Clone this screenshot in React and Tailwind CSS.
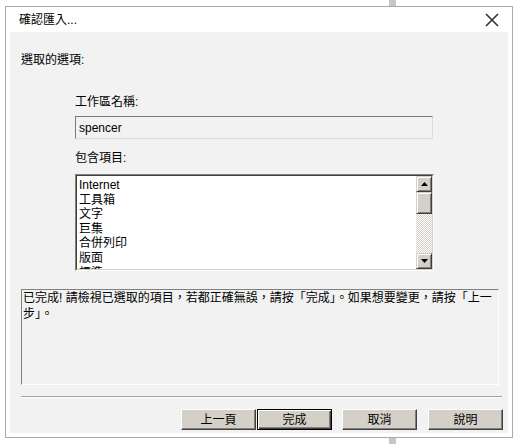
const items = ["Internet", "工具箱", "文字", "巨集", "合併列印", "版面", "標準"];

function ClassicButton({ label, isDefault, className = "" }) {
  const bevel = isDefault
    ? "border border-black shadow-[inset_1px_1px_#ffffff,inset_-1px_-1px_#404040,inset_-2px_-2px_#808080]"
    : "border-t border-l border-t-white border-l-white border-b border-r border-b-[#404040] border-r-[#404040] shadow-[inset_-1px_-1px_#808080]";
  return (
    <button
      className={`w-[75px] h-[21px] bg-[#d4d0c8] text-[12px] leading-[16px] text-black flex items-center justify-center ${bevel} ${className}`}
    >
      {label}
    </button>
  );
}

function ScrollArrow({ up }) {
  return (
    <div className="w-[16px] h-[16px] bg-[#d4d0c8] border-t border-l border-t-[#d4d0c8] border-l-[#d4d0c8] border-b border-r border-b-[#404040] border-r-[#404040] shadow-[inset_1px_1px_#ffffff,inset_-1px_-1px_#808080] flex items-center justify-center">
      <svg width="7" height="4" viewBox="0 0 7 4">
        {up ? (
          <polygon points="3.5,0 7,4 0,4" fill="#000" />
        ) : (
          <polygon points="0,0 7,0 3.5,4" fill="#000" />
        )}
      </svg>
    </div>
  );
}

export default function App() {
  return (
    <div className="relative w-[518px] h-[444px] bg-white overflow-hidden font-['Liberation_Sans','Noto_Sans_CJK_TC',sans-serif] text-black">
      <div className="absolute left-[389px] top-0 w-[7px] h-full bg-[#c6c6c6]" />

      <div className="absolute left-[5px] top-[6px] w-[508px] h-[432px] border border-[#aaaaaa] bg-white flex flex-col px-[4px] pb-[4px]">
        <div className="h-[25px] flex items-center justify-between pl-[9px] pr-[9px]">
          <span className="text-[12px] leading-[16px]">確認匯入...</span>
          <svg width="14" height="14" viewBox="0 0 14 14">
            <path d="M1 1 L13 13 M13 1 L1 13" stroke="#333" strokeWidth="1.6" />
          </svg>
        </div>

        <div className="flex-1 bg-[#f2f2f2] flex flex-col pl-[11px] text-[12px] leading-[16px]">
          <div className="mt-[20px] h-[16px]">選取的選項:</div>

          <div className="ml-[54px] flex flex-col">
            <div className="mt-[26px] h-[16px]">工作區名稱:</div>
            <div className="mt-[6px] w-[358px] h-[23px] bg-[#f2f2f2] border border-t-[#7a7a7a] border-l-[#7a7a7a] border-b-[#dcdcdc] border-r-[#dcdcdc] flex items-center pl-[3px] text-[12px]">
              spencer
            </div>

            <div className="mt-[11px] h-[16px]">包含項目:</div>
            <div className="mt-[8px] w-[359px] h-[97px] border border-t-[#808080] border-l-[#808080] border-b-white border-r-white">
              <div className="w-full h-full border border-t-[#404040] border-l-[#404040] border-b-[#d4d0c8] border-r-[#d4d0c8] bg-white flex">
                <div className="flex-1 overflow-hidden pl-[2px] pt-[2px]">
                  {items.map((it) => (
                    <div key={it} className="h-[14.6px] leading-[14.6px] text-[12px]">
                      {it}
                    </div>
                  ))}
                </div>
                <div className="w-[16px] h-full flex flex-col">
                  <ScrollArrow up />
                  <div className="w-[16px] h-[22px] bg-[#d4d0c8] border-t border-l border-t-[#d4d0c8] border-l-[#d4d0c8] border-b border-r border-b-[#404040] border-r-[#404040] shadow-[inset_1px_1px_#ffffff,inset_-1px_-1px_#808080]" />
                  <div className="flex-1 bg-[repeating-conic-gradient(#d4d0c8_0_25%,#ffffff_0_50%)] bg-[length:2px_2px]" />
                  <ScrollArrow />
                </div>
              </div>
            </div>
          </div>

          <div className="mt-[18px] w-[478px] h-[96px] border border-t-[#808080] border-l-[#808080] border-b-white border-r-white pl-[1px]">
            已完成! 請檢視已選取的項目，若都正確無誤，請按「完成」。如果想要變更，請按「上一
            <br />
            步」。
          </div>

          <div className="mt-[11px] w-[481px] h-[2px] border-t border-t-[#a0a0a0] border-b border-b-white" />

          <div className="mt-[11px] flex ml-[160px]">
            <ClassicButton label="上一頁" />
            <ClassicButton label="完成" isDefault className="ml-[1px]" />
            <ClassicButton label="取消" className="ml-[10px]" />
            <ClassicButton label="說明" className="ml-[11px]" />
          </div>
        </div>
      </div>
    </div>
  );
}
